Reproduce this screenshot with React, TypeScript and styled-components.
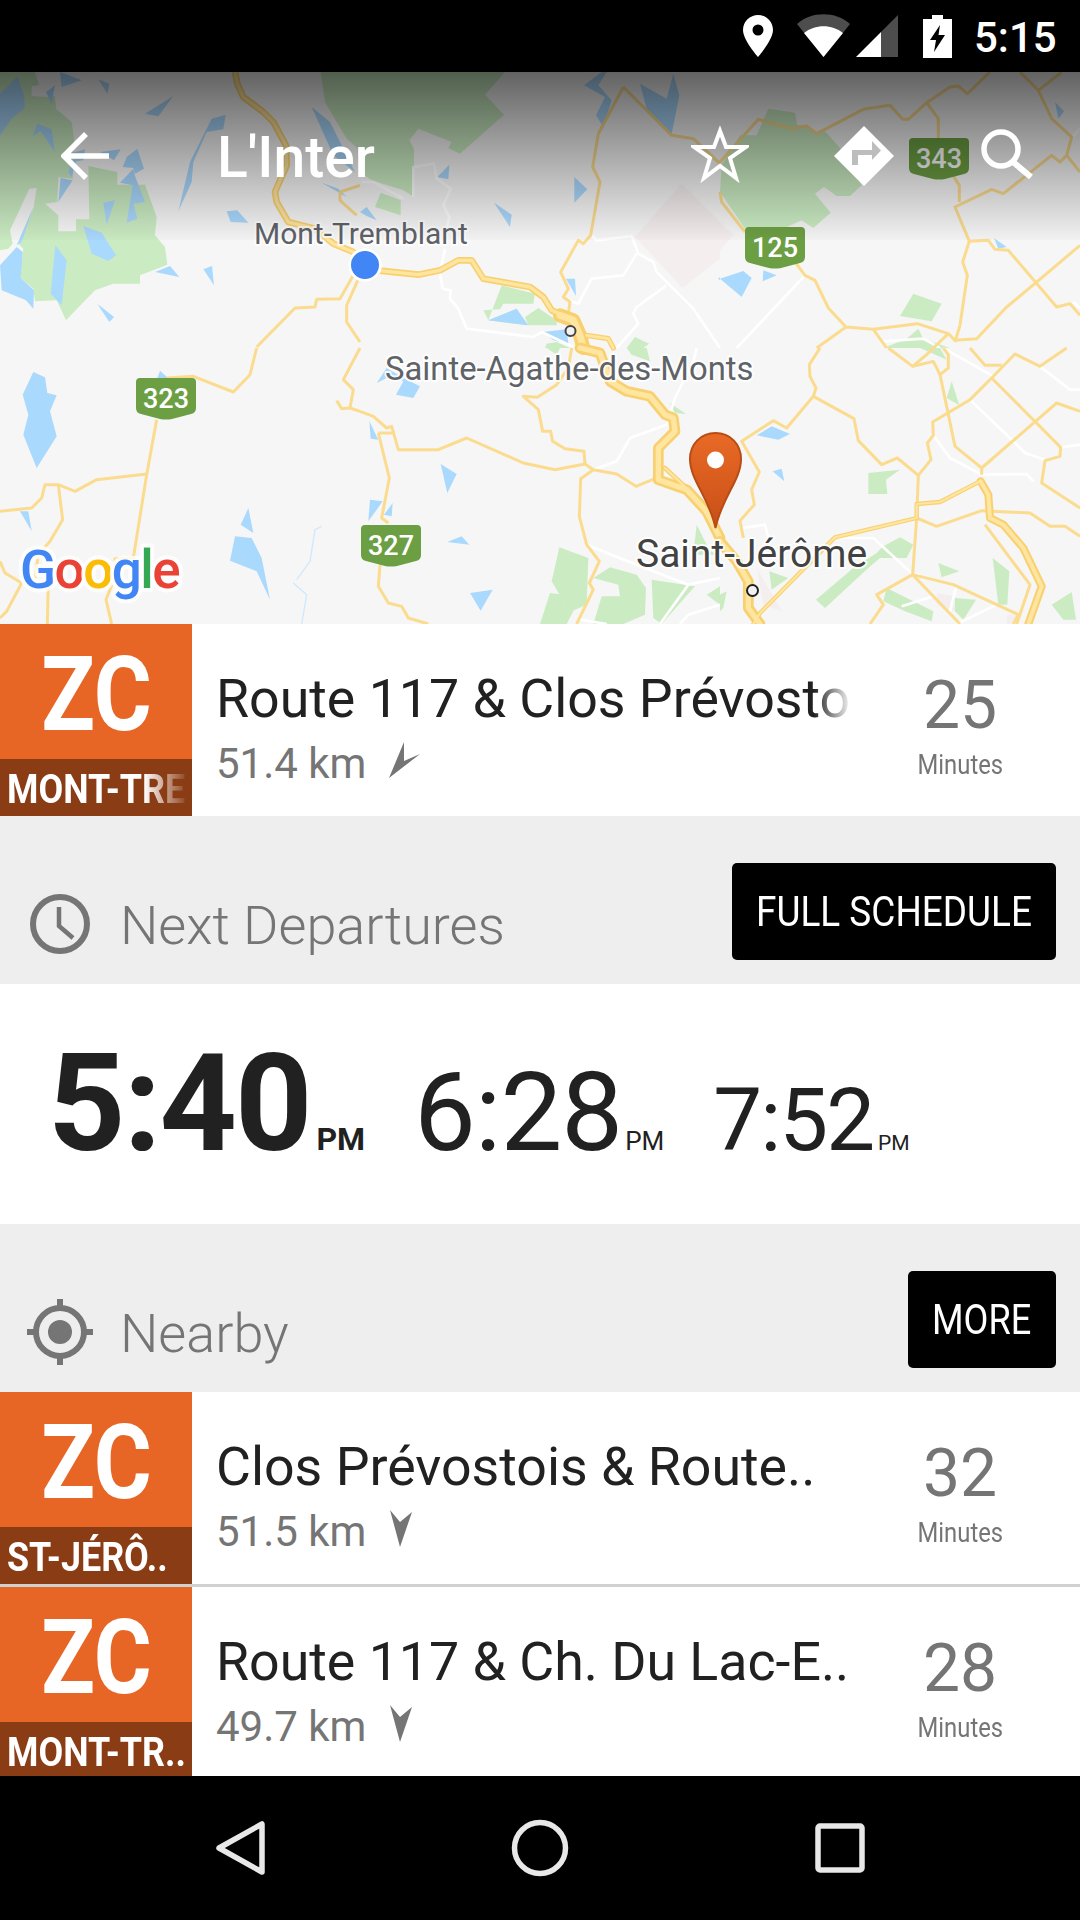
import React from "react";
import styled, { createGlobalStyle } from "styled-components";

const Global = createGlobalStyle`
  html, body { margin: 0; padding: 0; background: #000; }
  * { box-sizing: border-box; }
`;

const Screen = styled.div`
  width: 1080px; height: 1920px; display: flex; flex-direction: column; overflow: hidden;
  font-family: Roboto, "Liberation Sans", sans-serif; background: #eee;
`;
const StatusBar = styled.div`
  height: 72px; flex: none; background: #000; display: flex; align-items: flex-start; justify-content: flex-end;
  padding: 14px 28px 0 0; color: #fff;
`;
const StatusIcon = styled.svg<{ $gap: number }>`
  display: block; margin-right: ${(p) => p.$gap}px; flex: none;
`;
const Clock = styled.span`
  font-size: 42px; font-weight: 500; line-height: 48px; width: 78px; white-space: nowrap;
`;
const MapArea = styled.div`
  position: relative; height: 552px; flex: none; overflow: hidden; background: #f6f6f6;
`;
const MapSvg = styled.svg`
  display: block; width: 1080px; height: 552px;
`;
const Shade = styled.div`
  position: absolute; left: 0; right: 0; top: 0; height: 168px;
  background: linear-gradient(to bottom, rgba(0,0,0,.6), rgba(0,0,0,.02));
`;
const Toolbar = styled.div`
  position: absolute; left: 0; right: 0; top: 0; height: 168px; display: flex; align-items: flex-start; color: #fff;
`;
const ToolIcon = styled.svg<{ $left: number; $top: number }>`
  display: block; flex: none; margin-left: ${(p) => p.$left}px; margin-top: ${(p) => p.$top}px;
`;
const Title = styled.div`
  font-size: 57px; font-weight: 500; line-height: 68px; margin-left: 108px; margin-top: 52px; width: 471px; flex: none;
`;
const Main = styled.div`
  flex: 1; min-height: 0; overflow: hidden; display: flex; flex-direction: column;
`;
const Row = styled.div`
  height: 192px; flex: none; display: flex; background: #fff;
`;
const Divider = styled.div`
  height: 3px; flex: none; background: #d0d0d0;
`;
const Tile = styled.div`
  width: 192px; flex: none; display: flex; flex-direction: column; color: #fff; background: #e86625;
`;
const TileCode = styled.div`
  flex: 1; min-height: 0; font-size: 103px; font-weight: 700; text-align: center; line-height: 120px; padding-top: 11px;
  transform: scaleX(.86); transform-origin: 50% 50%; margin-left: 1px;
`;
const TileBand = styled.div`
  height: 57px; flex: none; background: #8a3c15; overflow: hidden; padding-left: 7px;
`;
const BandText = styled.div<{ $fade?: boolean }>`
  font-size: 41px; font-weight: 700; line-height: 48px; white-space: nowrap; transform: scaleX(.875); transform-origin: 0 50%;
  width: 212px; padding-top: 6px;
  ${(p) => p.$fade && "-webkit-mask-image: linear-gradient(to right, #000 74%, transparent 98%); mask-image: linear-gradient(to right, #000 74%, transparent 98%);"}
`;
const RowBody = styled.div`
  flex: 1; min-width: 0; padding: 45px 0 0 24px; display: flex; flex-direction: column;
`;
const StopName = styled.div<{ $fade?: boolean }>`
  font-size: 53.700px; line-height: 60px; color: #212121; white-space: nowrap;
  ${(p) => p.$fade && "-webkit-mask-image: linear-gradient(to right, #000 94%, transparent 100%); mask-image: linear-gradient(to right, #000 94%, transparent 100%);"}
`;
const Distance = styled.div`
  font-size: 42px; line-height: 48px; color: #757575; display: flex; align-items: flex-start; margin-top: 11px;
`;
const Bearing = styled.svg`
  display: block; margin-left: 23px; margin-top: 1px; flex: none;
`;
const Eta = styled.div`
  width: 150px; margin: 0 45px 0 33px; flex: none; display: flex; flex-direction: column; align-items: center; padding-top: 44px; color: #757575;
`;
const EtaNum = styled.div`
  font-size: 66px; line-height: 76px;
`;
const EtaUnit = styled.div`
  font-size: 28px; line-height: 32px; transform: scaleX(.85); margin-top: 5px;
`;
const SectionHead = styled.div`
  height: 168px; flex: none; background: #eee; display: flex; align-items: flex-end; justify-content: space-between; padding: 0 24px 24px 0;
`;
const SectionLabel = styled.div`
  display: flex; align-items: flex-start; padding-bottom: 3px;
`;
const SectionIcon = styled.svg`
  display: block; flex: none; margin-left: 27px;
`;
const SectionText = styled.div`
  font-size: 54px; font-weight: 300; line-height: 60px; color: #757575; margin-left: 27px; margin-top: 5px;
`;
const BlackButton = styled.div`
  height: 97px; background: #000; border-radius: 5px; color: #fff; display: flex; align-items: center; padding: 0 24px;
  font-size: 42px; line-height: 48px;
`;
const ButtonText = styled.span<{ $w: number; $squeeze: number }>`
  display: block; width: ${(p) => p.$w}px; white-space: nowrap; transform: scaleX(${(p) => p.$squeeze}); transform-origin: 0 50%;
`;
const Departures = styled.div`
  height: 240px; flex: none; background: #fff; display: flex; align-items: baseline; padding-left: 48px; color: #212121; padding-top: 40px;
`;
const Time = styled.span<{ $size: number; $bold?: boolean; $left: number; $track: number }>`
  font-size: ${(p) => p.$size}px; font-weight: ${(p) => (p.$bold ? 700 : 400)}; margin-left: ${(p) => p.$left}px; line-height: 160px;
  letter-spacing: ${(p) => p.$track}px;
`;
const Meridiem = styled.span<{ $size: number; $bold?: boolean; $left: number }>`
  font-size: ${(p) => p.$size}px; font-weight: ${(p) => (p.$bold ? 700 : 400)}; margin-left: ${(p) => p.$left}px;
`;
const NavBar = styled.div`
  height: 144px; flex: none; background: #000; display: flex; align-items: center;
`;
const NavIcon = styled.svg<{ $left: number }>`
  display: block; flex: none; margin-left: ${(p) => p.$left}px;
`;

type Tile_ = { x: number; y: number; green?: string[]; pink?: string[]; water?: string[]; white?: string[]; road?: string[]; thin?: string[]; hwy?: [string, number][] };

const tiles: Tile_[] = [
  {
    x: 0, y: 0,
    green: [
      "0,0 105,0 118,40 95,42 95,72 140,75 165,72 168,110 215,150 222,200 218,320 175,315 172,390 135,395 175,430 175,478 228,478 228,442 268,442 265,282 352,300 352,338 435,338 470,435 465,490 495,525 502,578 420,610 420,635 340,635 285,655 198,745 170,685 105,688 100,650 58,615 70,530 55,515 100,410 110,348 88,350 30,475 38,515 25,530 0,535",
      "962,0 1080,0 1080,235 1040,200 975,90",
    ],
    water: [
      "0,65 52,14 72,70 74,108 35,140 0,190", "180,0 245,25 185,45", "295,22 328,35 322,65", "138,60 165,40 155,95",
      "435,125 520,72 475,133", "98,192 112,155 155,172 165,240 122,178", "255,232 250,265 228,268 215,315 205,300 225,250 190,250",
      "300,240 362,232 342,265", "368,285 380,255 412,230 432,290 405,305 400,288", "360,332 400,290 405,312 435,390 400,395 412,440 380,452 398,340",
      "175,390 182,318 218,325", "310,392 345,385 320,458", "535,418 570,270 635,140 677,128 670,172 620,180 580,270 575,330",
      "680,418 712,415 745,452 692,450", "250,462 305,482 348,550 325,567 275,545", "166,520 200,565 185,700 152,665",
      "0,580 50,525 68,540 62,618 102,655 100,710 78,685 5,655", "465,600 510,582 538,615", "610,592 636,582 642,640", "292,695 342,735 328,750",
      "50,520 100,405 65,510", "965,332 1015,350 1040,375", "935,105 990,150 1065,300 1000,250",
    ],
    road: ["1080,610 1040,700 1040,750 1080,810", "1060,610 1020,680 950,682 945,705 885,708 770,825", "1080,340 1020,360 1020,385 1070,430"],
    hwy: [["705,0 712,35 730,75 790,120 820,150 858,220 860,280 825,360 830,390 865,450 945,470 1000,515 1060,540", 20]],
  },
  {
    x: 360, y: 0,
    green: [
      "0,0 435,0 375,68 432,128 300,245 265,228 275,210 175,170 148,205 162,230 162,375 130,355 35,325 0,300",
      "45,405 62,362 122,385 122,430", "425,640 525,665 520,695 430,695 420,712 370,715 385,745 470,710 500,760 385,745",
      "495,735 535,708 590,745 590,760 505,760", "560,815 590,810 630,828 555,828", "800,828 825,795 868,815 850,828",
    ],
    pink: ["965,335 1080,450 1080,560 968,648 825,495"],
    water: [
      "672,40 725,0 740,0 715,40 755,85 730,165 708,130 735,75", "840,35 920,80 940,5 958,70 935,185 860,110", "232,315 268,278 265,322",
      "643,315 682,352 643,392", "402,392 455,428 450,465", "10,365 130,382 60,372", "0,420 20,405 50,445 20,432", "385,745 470,710 505,760",
      "548,780 620,772 625,815 580,805", "618,620 645,620 648,672", "1075,620 1080,615 1080,625",
    ],
    white: [
      "160,375 160,285 222,275 230,320 272,350 250,400 268,435 260,470", "5,330 40,330 130,380", "255,530 240,605 248,650 272,655 270,680 295,710 320,770 520,795 545,780 640,825",
      "695,490 710,505 815,492 835,545 880,570 890,600 1000,710 1080,828", "830,545 790,610 695,620 655,695 625,685", "920,640 830,705 820,725 835,755 770,828",
    ],
    road: [
      "790,45 715,185 698,285 720,330 692,490 670,515 655,505 602,600 625,650 610,675 630,690 625,725",
      "790,45 935,190 1000,200 1080,275",
    ],
    hwy: [
      ["0,590 175,608 240,595 295,565 335,565 370,620 510,645 550,675 575,715 620,735", 20],
      ["600,730 640,745 660,790 670,828", 42],
      ["680,790 745,800 760,828", 16],
    ],
  },
  {
    x: 720, y: 0,
    green: [
      "145,110 225,122 232,160 255,160 290,185 315,178 362,230 425,340 390,372 350,372 312,345 285,365 332,422 280,468 245,445 190,470 75,470 0,360 5,280 60,190 110,190",
      "580,665 665,695 635,748 540,732", "560,800 595,770 610,800 690,828 490,828",
    ],
    pink: ["0,450 40,490 0,535"],
    water: ["1005,90 1032,118 1015,140", "0,620 70,597 95,618 65,675", "130,595 170,610 128,628", "822,498 860,525 835,530"],
    white: ["255,610 50,828", "1080,170 1055,200", "1060,690 1080,710", "490,808 610,800 660,828"],
    road: [
      "0,270 115,142 215,170 260,162 290,185 430,112 510,100 548,142 565,142 620,92 690,45 715,42 742,65 810,0",
      "620,92 655,140 655,240 718,340 718,390", "900,0 955,55 1025,0",
      "955,55 995,140 1055,195 1040,250 1020,270 995,250 850,365 815,352 705,405 748,508 805,505 825,532 865,535 948,632 1010,705 1050,695 1080,730",
      "748,508 728,570 742,610 720,760 705,810", "1040,250 1080,300",
      "1080,520 948,632 860,705 770,800 705,805 685,785 592,755 460,772 378,765 325,708 285,625 255,610 225,570",
      "378,765 290,828", "460,772 500,828", "685,785 640,828", "0,360 5,390 75,480",
    ],
  },
  {
    x: 0, y: 276,
    water: [
      "100,72 135,88 142,135 170,142 150,190 170,265 110,360 70,260 85,200 68,140", "480,68 510,95 470,95", "60,490 85,490 95,550",
      "745,480 760,555 722,530", "705,565 755,570 785,630 810,755 770,670 690,638",
    ],
    thin: ["965,535 945,545 930,640 890,695", "880,705 920,740 905,828"],
    road: [
      "770,0 750,80 700,132 580,85 500,90", "470,215 440,380 400,630 345,632 340,700 318,755 335,828",
      "440,378 290,395 225,430 175,410 135,410 125,450 95,480 0,490", "175,410 188,515 150,580 115,620 105,690", "0,640 15,675 65,705 20,790 0,810",
      "145,700 142,828", "1080,0 1030,95 1060,125 1050,180 1080,190", "1010,158 1025,182 1050,180",
    ],
  },
  {
    x: 360, y: 276,
    green: [
      "598,598 685,630 680,770 635,790 610,760 575,700", "540,828 570,735 612,740 610,760 640,790 620,828", "700,690 750,658 830,680 858,720 855,800 790,828 700,828 725,745 780,745 775,710",
      "875,695 1005,715 905,828 880,810", "1040,740 1080,715 1080,770", "1010,530 1050,610 1080,620 1000,620", "930,165 978,198 945,195", "800,0 860,0 870,40 815,20", "560,0 600,0 590,20",
    ],
    water: [
      "28,220 55,275 32,272", "242,348 290,378 262,435", "30,455 68,460 25,520", "98,465 95,505 72,500", "262,582 305,565 328,590", "330,735 398,725 362,788",
      "50,105 80,60 130,90 180,115 160,150 108,140 130,100 80,90",
    ],
    white: [
      "680,590 830,650 985,710 1080,690", "700,365 770,340 810,270 920,230 945,150 1000,40 1010,0", "660,815 740,828", "985,710 900,828", "1080,770 985,800 960,828",
    ],
    road: [
      "0,190 40,205 80,240 95,235 115,305 235,305 320,270 490,345 585,365 675,348 700,365 770,378 828,415 885,392", "55,255 105,255", "55,255 88,390 65,510 85,525",
      "60,650 55,715 85,765 125,775 145,810 205,828", "675,348 672,310 615,302 578,280 572,250 548,250 535,185 490,145 532,148 590,110 625,60 635,0",
      "700,365 662,392 658,505 680,590 718,640 688,705 700,725 650,828",
    ],
    hwy: [
      ["660,0 720,15 750,100 800,130 870,145 915,200 940,210 945,250 895,300 895,395 980,425 1040,490 1080,570", 32],
      ["915,360 1000,440 1060,530", 14],
    ],
  },
  {
    x: 720, y: 276,
    green: [
      "445,375 540,365 498,395 502,438 445,438", "695,100 718,172 680,150", "540,568 580,590 560,630 480,630 445,660 315,780 288,755 400,660 470,615 490,595",
      "655,645 718,670 665,688", "818,630 868,670 862,770 835,770", "995,770 1055,732 1068,815 1030,815", "500,720 640,790 635,820 555,790 490,760",
      "705,750 768,755 730,815 705,790", "148,670 205,690 155,725", "600,0 660,0 680,35", "0,740 20,730 10,780 0,790",
    ],
    pink: ["110,660 180,780 185,790 130,770", "650,735 705,745 705,790 650,770", "860,800 890,800 880,828 860,828"],
    water: ["110,262 155,235 210,258 175,275", "158,370 185,362 193,400"],
    white: [
      "670,0 820,85", "960,55 1050,125 1080,125", "750,155 880,280 915,315 975,335", "640,262 690,330 785,380 920,378 940,400", "1022,298 1080,290",
      "345,570 460,570 580,680 600,680", "65,540 135,530 145,570", "710,710 690,790", "545,775 640,745", "710,828 830,770",
    ],
    road: [
      "300,0 268,50 270,85 288,120 280,145 200,240 160,218 65,280 118,372 95,425 103,470 60,518 70,570",
      "280,145 402,212 415,278 485,350 532,330 595,382 633,335 622,285 640,262 638,222 750,155 815,90 885,18 960,55 1040,0",
      "505,0 578,55 640,40 660,80 685,60 685,20 670,0", "660,80 705,295 785,360 1010,165 1080,190", "578,55 620,20 640,0", "595,382 590,510 578,680", "750,0 795,52 845,52",
      "815,90 1022,298 1020,325 975,338 965,405 1080,480", "785,360 785,380", "590,510 650,535 785,488 930,495 990,535 1035,535 1080,565",
      "578,680 700,710 895,800 880,828", "578,680 470,740 490,770 450,828", "578,680 720,828", "795,530 930,710 890,828",
    ],
    hwy: [
      ["590,510 345,568 120,795 100,828", 13],
      ["590,510 590,468 660,462 780,400", 13],
      ["782,400 805,440 810,510 850,530 910,600 965,715 925,828", 24],
      ["0,580 50,640 85,700 85,780 120,828", 32],
    ],
  },
];

const Layers: React.FC = () => (
  <>
    {tiles.map((t) => (
      <g key={`g${t.x}${t.y}`} transform={`translate(${t.x} ${t.y}) scale(${1 / 3})`}>
        {t.pink?.map((p) => <polygon key={p} points={p} fill="#f5eeef" />)}
        {t.green?.map((p) => <polygon key={p} points={p} fill="#cbecc3" />)}
        {t.water?.map((p) => <polygon key={p} points={p} fill="#aad9fe" />)}
        {t.thin?.map((p) => <polyline key={p} points={p} fill="none" stroke="#cfe8ff" strokeWidth={4} />)}
        {t.white?.map((p) => <polyline key={p} points={p} fill="none" stroke="#fff" strokeWidth={8} strokeLinejoin="round" />)}
      </g>
    ))}
    {tiles.map((t) => (
      <g key={`r${t.x}${t.y}`} transform={`translate(${t.x} ${t.y}) scale(${1 / 3})`}>
        {t.road?.map((p) => <polyline key={p} points={p} fill="none" stroke="#fbdc8f" strokeWidth={9} strokeLinejoin="round" />)}
      </g>
    ))}
    {tiles.map((t) => (
      <g key={`h${t.x}${t.y}`} transform={`translate(${t.x} ${t.y}) scale(${1 / 3})`}>
        {t.hwy?.map(([p, w]) => <polyline key={p} points={p} fill="none" stroke="#f9d06f" strokeWidth={w} strokeLinejoin="round" strokeLinecap="round" />)}
        {t.hwy?.map(([p, w]) => <polyline key={p + "i"} points={p} fill="none" stroke="#fee5a0" strokeWidth={w * 0.5} strokeLinejoin="round" strokeLinecap="round" />)}
      </g>
    ))}
  </>
);

const Shield: React.FC<{ x: number; y: number; n: string }> = ({ x, y, n }) => (
  <g transform={`translate(${x} ${y})`}>
    <path d="M4 0H56Q60 0 60 4V30Q60 35 55 36L36 41Q30 42 24 41L5 36Q0 35 0 30V4Q0 0 4 0Z" fill="#6c9f43" />
    <text x="30" y="30" textAnchor="middle" fontFamily="Roboto" fontSize="27" fontWeight="500" fill="#fff">{n}</text>
  </g>
);

const MapLabel: React.FC<{ x: number; y: number; size: number; fill: string; children: string }> = ({ x, y, size, fill, children }) => (
  <text x={x} y={y} fontFamily="Roboto" fontSize={size} fill={fill} stroke="#fff" strokeOpacity={0.85} strokeWidth={4} paintOrder="stroke" strokeLinejoin="round">{children}</text>
);

const MapView: React.FC = () => (
  <MapSvg viewBox="0 0 1080 552">
    <defs>
      <linearGradient id="pin" x1="0" y1="0" x2="0" y2="1">
        <stop offset="0" stopColor="#e96a26" />
        <stop offset="1" stopColor="#c94f17" />
      </linearGradient>
    </defs>
    <rect width="1080" height="552" fill="#f6f6f6" />
    <Layers />
    <Shield x={745} y={155} n="125" />
    <Shield x={909} y={66} n="343" />
    <Shield x={136} y={306} n="323" />
    <Shield x={361} y={453} n="327" />
    <MapLabel x={254} y={172} size={30} fill="#5f6368">Mont-Tremblant</MapLabel>
    <MapLabel x={385} y={308} size={32.800} fill="#5f6368">Sainte-Agathe-des-Monts</MapLabel>
    <MapLabel x={636} y={495} size={39} fill="#424242">Saint-Jérôme</MapLabel>
    <circle cx="570.5" cy="259" r="5" fill="#f2f2f2" stroke="#444" strokeWidth="2" />
    <circle cx="752.5" cy="518.5" r="5.5" fill="#f2f2f2" stroke="#222" strokeWidth="2" />
    <circle cx="365" cy="193" r="17" fill="#000" opacity=".12" />
    <circle cx="365" cy="193" r="15.5" fill="#4285f4" stroke="#fff" strokeWidth="3" />
    <g transform="translate(0 -72)">
      <path d="M715.5 433C701 433 690 444 690 459C690 480 709 497 715.5 528C722 497 741 480 741 459C741 444 730 433 715.5 433Z" fill="url(#pin)" stroke="#b84c14" strokeWidth="2" />
      <circle cx="715.5" cy="460" r="8.5" fill="#fff" />
    </g>
    <text x="20" y="516" fontFamily="Roboto" fontSize="53" fontWeight="500" stroke="#fff" strokeOpacity=".8" strokeWidth="8" paintOrder="stroke" strokeLinejoin="round" letterSpacing="-1.5">
      <tspan fill="#4285f4">G</tspan><tspan fill="#ea4335">o</tspan><tspan fill="#fbbc05">o</tspan><tspan fill="#4285f4">g</tspan><tspan fill="#34a853">l</tspan><tspan fill="#ea4335">e</tspan>
    </text>
  </MapSvg>
);

const NavArrow: React.FC<{ down?: boolean }> = ({ down }) => (
  <Bearing width="32" height="38" viewBox="0 0 32 38">
    {down ? (
      <polygon points="1,1 11,13 23,3 11,38" fill="#757575" />
    ) : (
      <polygon points="0,37 15,1 15,20 31,13" fill="#757575" />
    )}
  </Bearing>
);

const StopRow: React.FC<{ band: string; name: string; km: string; eta: string; fadeBand?: boolean; fadeName?: boolean; down?: boolean }> = ({ band, name, km, eta, fadeBand, fadeName, down }) => (
  <Row>
    <Tile>
      <TileCode>ZC</TileCode>
      <TileBand><BandText $fade={fadeBand}>{band}</BandText></TileBand>
    </Tile>
    <RowBody>
      <StopName $fade={fadeName}>{name}</StopName>
      <Distance>{km}<NavArrow down={down} /></Distance>
    </RowBody>
    <Eta>
      <EtaNum>{eta}</EtaNum>
      <EtaUnit>Minutes</EtaUnit>
    </Eta>
  </Row>
);

export default function App() {
  return (
    <Screen>
      <Global />
      <StatusBar>
        <StatusIcon $gap={24} width="30" height="44" viewBox="0 0 30 44">
          <path fillRule="evenodd" d="M15 1C7 1 0 7.500 0 16C0 26 15 43 15 43S30 26 30 16C30 7.500 23 1 15 1ZM15 10.500A5.500 5.500 0 1 1 15 21.500A5.500 5.500 0 1 1 15 10.500Z" fill="#fff" />
        </StatusIcon>
        <StatusIcon $gap={6} width="53" height="44" viewBox="0 0 53 44">
          <path d="M0 10C14 -3 39 -3 53 10L26.500 43Z" fill="#4d4d4d" />
          <path d="M7 19C18 10 35 10 46 19L26.500 43Z" fill="#fff" />
        </StatusIcon>
        <StatusIcon $gap={25} width="42" height="44" viewBox="0 0 42 44">
          <path d="M42 1V43H25V18Z" fill="#4d4d4d" />
          <path d="M25 18V43H0Z" fill="#fff" />
        </StatusIcon>
        <StatusIcon $gap={22} width="29" height="44" viewBox="0 0 29 44">
          <path fillRule="evenodd" d="M9 1H20V5H29V44H0V5H9ZM17 11L7 26H13L11 38L22 21H15.500Z" fill="#fff" />
        </StatusIcon>
        <Clock>5:15</Clock>
      </StatusBar>
      <MapArea>
        <MapView />
        <Shade />
        <Toolbar>
          <ToolIcon $left={61} $top={60} width="48" height="48" viewBox="0 0 48 48">
            <path d="M25 2L3 24L25 46M3 24H48" fill="none" stroke="#fff" strokeWidth="5.500" />
          </ToolIcon>
          <Title>L'Inter</Title>
          <ToolIcon $left={3} $top={53} width="58" height="58" viewBox="0 0 58 58">
            <path d="M29 6L35 22L55 22L39 33L45 53L29 41L13 53L19 33L3 22L23 22Z" fill="none" stroke="#fff" strokeWidth="4" />
          </ToolIcon>
          <ToolIcon $left={85} $top={54} width="60" height="60" viewBox="0 0 60 60">
            <path d="M30 0L60 30L30 60L0 30Z" fill="#fff" />
            <path d="M18 39V24H38V15L47 24.500L38 34V29H24V39Z" fill="#bdbdbd" />
          </ToolIcon>
          <ToolIcon $left={87} $top={57} width="52" height="50" viewBox="0 0 52 50">
            <circle cx="20" cy="20" r="17" fill="none" stroke="#fff" strokeWidth="5.500" />
            <path d="M32 33L50 48" stroke="#fff" strokeWidth="6" />
          </ToolIcon>
        </Toolbar>
      </MapArea>
      <Main>
        <StopRow band="MONT-TRE" name="Route 117 & Clos Prévosto" km="51.4 km" eta="25" fadeBand fadeName />
        <SectionHead>
          <SectionLabel>
            <SectionIcon width="66" height="66" viewBox="0 0 66 66">
              <circle cx="33" cy="33" r="27" fill="none" stroke="#757575" strokeWidth="6" />
              <path d="M32 16V35L46 47" fill="none" stroke="#757575" strokeWidth="4.500" />
            </SectionIcon>
            <SectionText>Next Departures</SectionText>
          </SectionLabel>
          <BlackButton><ButtonText $w={276} $squeeze={0.88}>FULL SCHEDULE</ButtonText></BlackButton>
        </SectionHead>
        <Departures>
          <Time $size={135} $bold $left={0} $track={-2}>5:40</Time>
          <Meridiem $size={32} $bold $left={6}>PM</Meridiem>
          <Time $size={110} $left={49} $track={-1}>6:28</Time>
          <Meridiem $size={26} $left={3}>PM</Meridiem>
          <Time $size={87} $left={49} $track={-2}>7:52</Time>
          <Meridiem $size={21} $left={5}>PM</Meridiem>
        </Departures>
        <SectionHead>
          <SectionLabel>
            <SectionIcon width="66" height="66" viewBox="0 0 66 66">
              <circle cx="33" cy="33" r="24" fill="none" stroke="#757575" strokeWidth="6" />
              <circle cx="33" cy="33" r="12" fill="#757575" />
              <path d="M33 0V9M33 57V66M0 33H9M57 33H66" stroke="#757575" strokeWidth="6" />
            </SectionIcon>
            <SectionText>Nearby</SectionText>
          </SectionLabel>
          <BlackButton><ButtonText $w={100} $squeeze={0.86}>MORE</ButtonText></BlackButton>
        </SectionHead>
        <StopRow band="ST-JÉRÔ.." name="Clos Prévostois & Route.." km="51.5 km" eta="32" down />
        <Divider />
        <StopRow band="MONT-TR.." name="Route 117 & Ch. Du Lac-E.." km="49.7 km" eta="28" down />
      </Main>
      <NavBar>
        <NavIcon $left={214} width="54" height="56" viewBox="0 0 54 56">
          <path d="M48 4V52L5 28Z" fill="none" stroke="#e8e8e8" strokeWidth="5.500" strokeLinejoin="round" />
        </NavIcon>
        <NavIcon $left={243} width="58" height="58" viewBox="0 0 58 58">
          <circle cx="29" cy="29" r="25.500" fill="none" stroke="#e8e8e8" strokeWidth="5.500" />
        </NavIcon>
        <NavIcon $left={246} width="50" height="50" viewBox="0 0 50 50">
          <rect x="3" y="3" width="44" height="44" rx="2" fill="none" stroke="#e8e8e8" strokeWidth="5.500" />
        </NavIcon>
      </NavBar>
    </Screen>
  );
}
